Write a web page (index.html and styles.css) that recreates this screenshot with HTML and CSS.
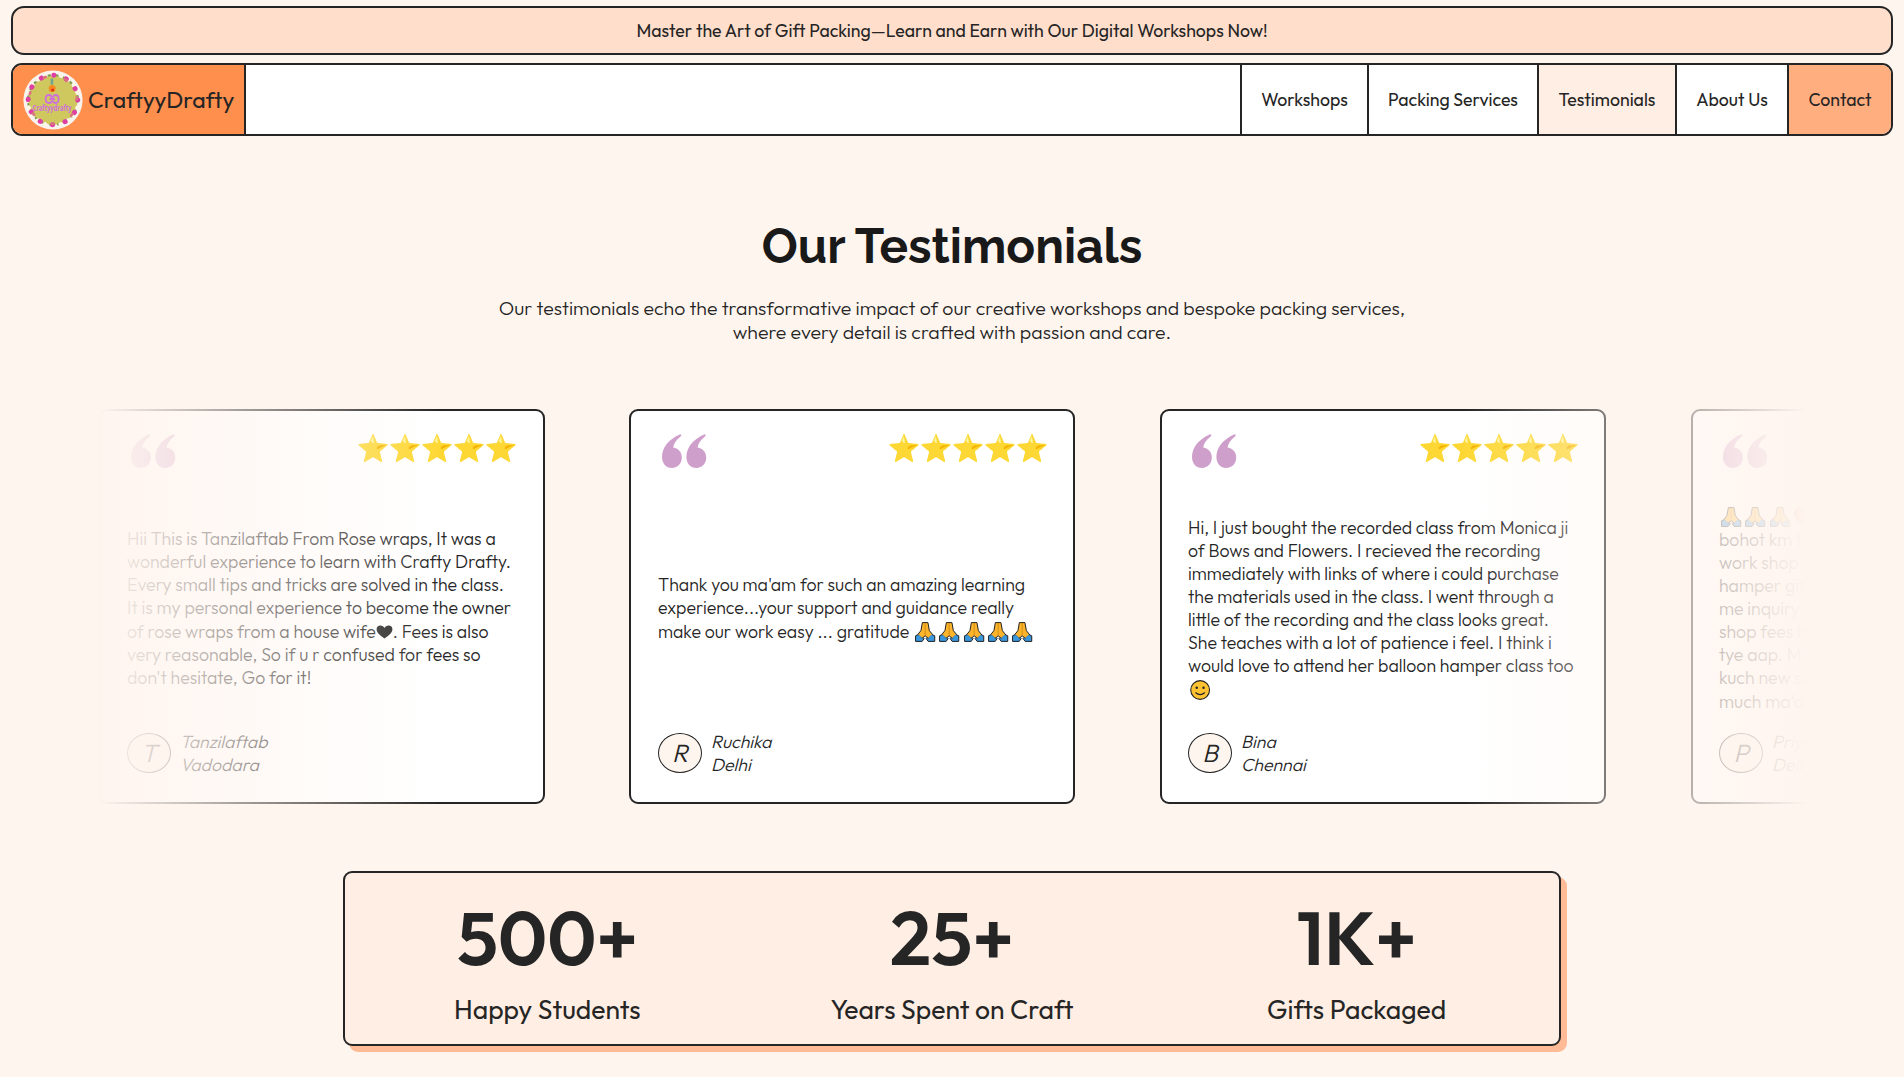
FILE: index.html
```html
<!DOCTYPE html>
<html lang="en">
<head>
<meta charset="utf-8">
<title>CraftyyDrafty – Testimonials</title>
<link rel="stylesheet" href="styles.css">
</head>
<body>
<svg class="defs" width="0" height="0" aria-hidden="true">
  <defs>
    <symbol id="star" viewBox="0 0 32 32">
      <path d="M16 2.2 L20 11.4 Q20.3 12 21 12.1 L30.2 13 Q31.2 13.3 30.4 14.2 L23.3 20.3 Q22.8 20.8 23 21.5 L25.2 30.3 Q25.2 31.4 24.1 31 L16.6 26.4 Q16 26.1 15.4 26.4 L7.9 31 Q6.8 31.4 6.8 30.3 L9 21.5 Q9.2 20.8 8.7 20.3 L1.6 14.2 Q.8 13.3 1.8 13 L11 12.1 Q11.7 12 12 11.4 Z" fill="#fdd835"/>
      <path d="M15.9 5 L16.9 11.5 Q16.8 12.8 15.3 11.6 L13.8 10 Z" fill="#fff59d"/>
      <path d="M29.6 13.8 L20.5 18.2 Q19.3 18.2 20 16.2 L21.6 14.6 Z" fill="#f4b400"/>
    </symbol>
    <symbol id="quote" viewBox="0 0 45 34">
      <g fill="#cf9fcb">
        <path id="mark" d="M18.2 .2 Q20.2 .6 18.6 2.4 C14 6 11.6 9.6 11.2 13.6 C16.8 14.4 19.8 18.6 19.8 23.6 C19.8 29.6 15.6 34 10 34 C4 34 0 29.6 0 22.8 C0 13.6 6.4 5.4 18.2 .2 Z"/>
        <use href="#mark" x="24.4"/>
      </g>
    </symbol>
    <symbol id="pray" viewBox="0 0 24 22">
      <path d="M2.4 14.8 L6.4 13 L11 17.6 L9 20.4 H2.4 Z M21.6 14.8 L17.6 13 L13 17.6 L15 20.4 H21.6 Z" fill="#3a96dd" stroke="#222" stroke-width="1"/>
      <path d="M9.2 1.6 H14.8 L16.2 9.6 L19.4 13.6 L15.2 17.4 L12 14.8 L8.8 17.4 L4.6 13.6 L7.8 9.6 Z" fill="#fbb42c" stroke="#222" stroke-width="1" stroke-linejoin="round"/>
      <path d="M5 14.4 L8.4 17.6 M19 14.4 L15.6 17.6" stroke="#3a96dd" stroke-width="1.6"/>
      <path d="M12 2.2 V14" stroke="#c9820f" stroke-width=".8"/>
    </symbol>
    <symbol id="smile" viewBox="0 0 24 22">
      <circle cx="12" cy="11" r="9.4" fill="#ffc233" stroke="#222" stroke-width="1.1"/>
      <circle cx="8.6" cy="8.8" r="1.2" fill="#222"/><circle cx="15.4" cy="8.8" r="1.2" fill="#222"/>
      <path d="M7.6 13.8 Q12 17.6 16.4 13.8" fill="none" stroke="#222" stroke-width="1.2" stroke-linecap="round"/>
    </symbol>
    <symbol id="heart" viewBox="0 0 17 14">
      <path d="M8.5 13.4 C5 10.8 .6 8 .6 4.2 C.6 2 2.2 .6 4.2 .6 C6.2 .6 7.8 1.6 8.5 3 C9.2 1.6 10.8 .6 12.8 .6 C14.8 .6 16.4 2 16.4 4.2 C16.4 8 12 10.8 8.5 13.4 Z" fill="#252525"/>
    </symbol>
    <symbol id="redheart" viewBox="0 0 24 22">
      <path d="M12 19.5 C7 16 2.6 12.5 2.6 7.4 C2.6 3.8 5 2 7.4 2 C9.6 2 11.2 3.2 12 5 C12.8 3.2 14.4 2 16.6 2 C19 2 21.4 3.8 21.4 7.4 C21.4 12.5 17 16 12 19.5 Z" fill="#f03a17" stroke="#222" stroke-width="1"/>
    </symbol>
  </defs>
</svg>

<p class="banner">Master the Art of Gift Packing—Learn and Earn with Our Digital Workshops Now!</p>

<header class="nav">
  <a class="brand">
    <svg class="logo" viewBox="0 0 60 60">
      <circle cx="30" cy="30" r="29.6" fill="#f8f3ee"/>
      <circle cx="30" cy="30" r="24.6" fill="#cfc85f"/>
      <g fill="none" stroke-linecap="round">
        <circle cx="30" cy="30" r="25" stroke="#7f9a55" stroke-width="2" stroke-dasharray="2 6"/>
        <circle cx="30" cy="30" r="25.6" stroke="#fbf7e4" stroke-width="4.6" stroke-dasharray=".1 7.9"/>
        <circle cx="30" cy="30" r="24.8" stroke="#df3fa4" stroke-width="5" stroke-dasharray=".1 12.9"/>
        <circle cx="30" cy="30" r="24" stroke="#d9737f" stroke-width="2.6" stroke-dasharray="2 20" stroke-dashoffset="7"/>
      </g>
      <rect x="27.6" y="8.6" width="2.6" height="6" fill="#6fa58c"/>
      <circle cx="29.2" cy="18.6" r="3.5" fill="#f58a1f"/>
      <circle cx="29.6" cy="20" r="1.5" fill="#e02d1b"/>
      <g fill="none" stroke="#cf6fdc" stroke-width="1.8">
        <path d="M28.6 28 V27.6 Q28.6 25 26 25 Q22.6 25 22.6 29 Q22.6 33 26 33 Q28.6 33 28.6 30.4 M30.2 30.4 Q30.2 33 32.6 33 Q35.6 33 35.6 29 Q35.6 25 32.6 25 Q30.2 25 30.2 27.6 M26.6 29 H32"/>
      </g>
      <text x="29" y="41" text-anchor="middle" textLength="39" lengthAdjust="spacingAndGlyphs" class="logo-text">Craftyydrafty</text>
    </svg>
    <span>CraftyyDrafty</span>
  </a>
  <nav class="links">
    <a class="w1">Workshops</a>
    <a class="w2">Packing Services</a>
    <a class="w3 active">Testimonials</a>
    <a class="w4">About Us</a>
    <a class="w5 contact">Contact</a>
  </nav>
</header>

<main>
  <h1>Our Testimonials</h1>
  <p class="intro">Our testimonials echo the transformative impact of our creative workshops and bespoke packing services,<br>where every detail is crafted with passion and care.</p>

  <section class="strip">
    <article class="card first">
      <div class="top"><svg class="quote"><use href="#quote"/></svg><div class="stars"><svg><use href="#star"/></svg><svg><use href="#star"/></svg><svg><use href="#star"/></svg><svg><use href="#star"/></svg><svg><use href="#star"/></svg></div></div>
      <p class="text"><span>Hii This is Tanzilaftab From Rose wraps, It was a</span><span>wonderful experience to learn with Crafty Drafty.</span><span>Every small tips and tricks are solved in the class.</span><span>It is my personal experience to become the owner</span><span class="tall">of rose wraps from a house wife<svg class="heart"><use href="#heart"/></svg>. Fees is also</span><span>very reasonable, So if u r confused for fees so</span><span>don't hesitate, Go for it!</span></p>
      <div class="author"><i class="avatar">T</i><div class="who"><span>Tanzilaftab</span><span>Vadodara</span></div></div>
    </article>
    <article class="card second">
      <div class="top"><svg class="quote"><use href="#quote"/></svg><div class="stars"><svg><use href="#star"/></svg><svg><use href="#star"/></svg><svg><use href="#star"/></svg><svg><use href="#star"/></svg><svg><use href="#star"/></svg></div></div>
      <p class="text"><span>Thank you ma'am for such an amazing learning</span><span>experience...your support and guidance really</span><span class="tall">make our work easy ... gratitude <svg class="emoji"><use href="#pray"/></svg><svg class="emoji"><use href="#pray"/></svg><svg class="emoji"><use href="#pray"/></svg><svg class="emoji"><use href="#pray"/></svg><svg class="emoji"><use href="#pray"/></svg></span></p>
      <div class="author"><i class="avatar">R</i><div class="who"><span>Ruchika</span><span>Delhi</span></div></div>
    </article>
    <article class="card">
      <div class="top"><svg class="quote"><use href="#quote"/></svg><div class="stars"><svg><use href="#star"/></svg><svg><use href="#star"/></svg><svg><use href="#star"/></svg><svg><use href="#star"/></svg><svg><use href="#star"/></svg></div></div>
      <p class="text"><span>Hi, I just bought the recorded class from Monica ji</span><span>of Bows and Flowers. I recieved the recording</span><span>immediately with links of where i could purchase</span><span>the materials used in the class. I went through a</span><span>little of the recording and the class looks great.</span><span>She teaches with a lot of patience i feel. I think i</span><span>would love to attend her balloon hamper class too</span><span class="tall"><svg class="emoji"><use href="#smile"/></svg></span></p>
      <div class="author"><i class="avatar">B</i><div class="who"><span>Bina</span><span>Chennai</span></div></div>
    </article>
    <article class="card">
      <div class="top"><svg class="quote"><use href="#quote"/></svg></div>
      <p class="text"><span class="tall"><svg class="emoji"><use href="#pray"/></svg><svg class="emoji"><use href="#pray"/></svg><svg class="emoji"><use href="#pray"/></svg><svg class="emoji"><use href="#redheart"/></svg></span><span>bohot km fu</span><span>work shop s</span><span>hamper gif</span><span>me inquiry k</span><span>shop fees b</span><span>tye aap. Me</span><span>kuch new sh</span><span class="tall">much ma'a</span></p>
      <div class="author"><i class="avatar">P</i><div class="who"><span>Priya</span><span>Delhi</span></div></div>
    </article>
    <div class="fade left"></div>
    <div class="fade right"></div>
  </section>

  <section class="stats">
    <div><strong>500+</strong><span>Happy Students</span></div>
    <div><strong>25+</strong><span>Years Spent on Craft</span></div>
    <div><strong>1K+</strong><span>Gifts Packaged</span></div>
  </section>
</main>
</body>
</html>
```
FILE: styles.css
```css
* { box-sizing: border-box; margin: 0; padding: 0; }

body {
  height: 1077px;
  padding: 6px 11px 0;
  overflow: hidden;
  background: #fff5ef;
  color: #252525;
  font-family: Outfit, Lato, sans-serif;
}
.defs { display: block; }

.banner {
  height: 49px;
  border: 2px solid #252525;
  border-radius: 13px;
  background: #ffdecb;
  font-size: 17.7px;
  line-height: 45px;
  text-align: center;
}

.nav {
  display: flex;
  justify-content: space-between;
  height: 73px;
  margin-top: 8px;
  overflow: hidden;
  border: 2px solid #252525;
  border-radius: 11px;
  background: #fff;
}
.brand {
  display: flex;
  align-items: center;
  gap: 5px;
  width: 233px;
  padding-left: 10px;
  border-right: 2px solid #252525;
  background: #ff8f4d;
  font-size: 23px;
}
.logo { width: 60px; height: 60px; }
.logo-text { font: 700 8.5px "Open Sans", sans-serif; fill: #cf6fdc; }
.links { display: flex; font-size: 17.7px; }
.links a {
  display: flex;
  align-items: center;
  justify-content: center;
  border-left: 2px solid #252525;
}
.w1 { width: 127px; }
.w2 { width: 170px; }
.w3 { width: 138px; }
.w4 { width: 112px; }
.w5 { width: 104px; }
.active { background: #ffeee3; }
.contact { background: #ffae80; }

h1 {
  margin-top: 82px;
  color: #191919;
  font: 700 47.7px/56px Raleway, Lato, sans-serif;
  text-align: center;
}
.intro {
  margin-top: 22px;
  font-size: 19.5px;
  font-weight: 300;
  line-height: 24px;
  text-align: center;
}

.strip {
  position: relative;
  display: flex;
  gap: 85px;
  width: 1708px;
  height: 395px;
  margin: 65px auto 0;
  overflow: hidden;
}
.card {
  display: flex;
  flex: none;
  flex-direction: column;
  width: 446px;
  padding: 23px 26px 26px;
  border: 2px solid #252525;
  border-radius: 9px;
  background: #fff;
  font-size: 17.7px;
  font-weight: 300;
}
.first { margin: 0 -1px 0 1px; padding-right: 27px; }
.second { padding-left: 27px; }
.top { display: flex; justify-content: space-between; height: 52px; }
.quote { width: 45px; height: 34px; margin-left: 4px; }
.stars { display: flex; margin: -3px -1px 0 0; }
.stars svg { width: 32px; height: 32px; }
.text {
  display: flex;
  flex: 1;
  flex-direction: column;
  justify-content: center;
  line-height: 23px;
  white-space: nowrap;
}
.text span { height: 23px; }
.text .tall { height: 24px; line-height: 25px; }
.emoji { width: 24.3px; height: 22px; vertical-align: -5px; }
.heart { width: 17px; height: 14px; vertical-align: -1px; }

.author { display: flex; align-items: center; gap: 9px; height: 46px; font-style: italic; }
.avatar {
  display: flex;
  align-items: center;
  justify-content: center;
  width: 44px;
  height: 40px;
  border: 1px solid #252525;
  border-radius: 50%;
  background: #fff5ef;
  font-size: 25px;
}
.who { display: flex; flex-direction: column; line-height: 23px; }

.fade { position: absolute; top: 0; bottom: 0; width: 20%; }
.left { left: 0; background: linear-gradient(to right, #fff5ef, rgba(255, 245, 241, 0)); }
.right { right: 0; background: linear-gradient(to left, #fff5ef, rgba(255, 245, 241, 0)); }

.stats {
  display: grid;
  grid-template-columns: repeat(3, 1fr);
  width: 1218px;
  height: 175px;
  margin: 67px auto 0;
  padding-top: 19px;
  border: 2px solid #252525;
  border-radius: 9px;
  background: #ffeee3;
  box-shadow: 6px 6px 0 #ffbb96;
  text-align: center;
}
.stats div { display: flex; flex-direction: column; gap: 11px; }
.stats strong { font: 600 74.5px/90px Outfit, Inter, sans-serif; }
.stats span { font-size: 26.5px; line-height: 32px; }
```
